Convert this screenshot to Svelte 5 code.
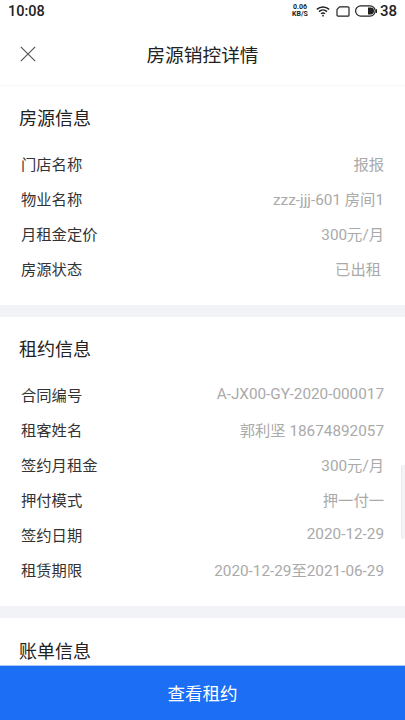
<script lang="ts">
	interface Row {
		label: string;
		value: string;
		inset?: boolean;
	}

	const houseRows: Row[] = [
		{ label: "门店名称", value: "报报" },
		{ label: "物业名称", value: "zzz-jjj-601 房间1" },
		{ label: "月租金定价", value: "300元/月" },
		{ label: "房源状态", value: "已出租", inset: true },
	];

	const leaseRows: Row[] = [
		{ label: "合同编号", value: "A-JX00-GY-2020-000017" },
		{ label: "租客姓名", value: "郭利坚 18674892057" },
		{ label: "签约月租金", value: "300元/月" },
		{ label: "押付模式", value: "押一付一" },
		{ label: "签约日期", value: "2020-12-29" },
		{ label: "租赁期限", value: "2020-12-29至2021-06-29" },
	];

	const sections = [
		{ title: "房源信息", rows: houseRows },
		{ title: "租约信息", rows: leaseRows },
	];
</script>

<div class="page">
	<header class="status-bar">
		<span class="time">10:08</span>
		<div class="status-icons">
			<span class="speed"><span>0.06</span><span>KB/S</span></span>
			<svg class="wifi" width="14" height="12" viewBox="0 0 16 13" fill="none" stroke="#222" stroke-width="1.7">
				<path d="M1 4.6 C5 0.9 11 0.9 15 4.6" />
				<path d="M3.4 7.2 C6 4.9 10 4.9 12.6 7.2" />
				<path d="M5.8 9.6 C7 8.6 9 8.6 10.2 9.6" />
				<circle cx="8" cy="11.8" r="1" fill="#222" stroke="none" />
			</svg>
			<svg class="sim" width="14" height="11" viewBox="0 0 14 11" fill="none" stroke="#222" stroke-width="1.2">
				<path d="M3.6 0.8 H12 a1 1 0 0 1 1 1 V9.2 a1 1 0 0 1 -1 1 H2 a1 1 0 0 1 -1 -1 V3.4 Z" />
			</svg>
			<svg class="battery" width="22" height="12" viewBox="0 0 22 12">
				<rect x="0.6" y="0.8" width="19.6" height="10.4" rx="5.2" fill="none" stroke="#222" stroke-width="1.2" />
				<path d="M13 2.6 H15.6 a3.4 3.4 0 0 1 0 6.8 H13 Z" fill="#222" />
				<rect x="20.7" y="4" width="1.3" height="4" rx="0.6" fill="#222" />
			</svg>
			<span class="level">38</span>
		</div>
	</header>

	<nav class="nav-bar">
		<button class="close" aria-label="关闭">
			<svg width="16" height="16" viewBox="0 0 16 16" stroke="#555" stroke-width="1.2" fill="none">
				<path d="M0.8 0.8 L15.2 15.2 M15.2 0.8 L0.8 15.2" />
			</svg>
		</button>
		<h1>房源销控详情</h1>
	</nav>

	<main class="content">
		{#each sections as section}
			<section class="card">
				<h2>{section.title}</h2>
				{#each section.rows as row}
					<div class="row">
						<span class="label">{row.label}</span>
						<span class="value" class:inset={row.inset}>{row.value}</span>
					</div>
				{/each}
			</section>
		{/each}
		<section class="card last">
			<h2>账单信息</h2>
		</section>
		<div class="scroll-thumb"></div>
	</main>

	<button class="footer-btn">查看租约</button>
</div>

<style>
	:global(body) {
		margin: 0;
		background: #fff;
	}

	.page {
		width: 405px;
		height: 720px;
		display: flex;
		flex-direction: column;
		overflow: hidden;
		background: #f2f3f7;
		font-family: Roboto, "Noto Sans CJK SC", sans-serif;
	}

	.status-bar {
		height: 22px;
		padding: 0 8px;
		display: flex;
		align-items: center;
		justify-content: space-between;
		background: #fff;
		color: #222;
		flex-shrink: 0;
	}

	.time {
		font-size: 14.5px;
		font-weight: 500;
	}

	.status-icons {
		display: flex;
		align-items: center;
	}

	.speed {
		display: flex;
		flex-direction: column;
		align-items: center;
		font-size: 7px;
		line-height: 7px;
		font-weight: 700;
		margin-right: 8px;
	}

	.sim {
		margin-left: 6px;
	}

	.battery {
		margin-left: 5px;
	}

	.level {
		font-size: 15px;
		font-weight: 500;
		margin-left: 3px;
	}

	.nav-bar {
		height: 63px;
		position: relative;
		display: flex;
		align-items: center;
		justify-content: center;
		background: #fff;
		flex-shrink: 0;
		border-bottom: 1px solid #f7f7fa;
	}

	.close {
		position: absolute;
		left: 20px;
		top: 24px;
		padding: 0;
		border: none;
		background: none;
		line-height: 0;
	}

	h1 {
		margin: 0;
		font-size: 18.7px;
		font-weight: 400;
		color: #222;
	}

	.content {
		flex: 1;
		position: relative;
		overflow: hidden;
		display: flex;
		flex-direction: column;
		gap: 12px;
	}

	.card {
		background: #fff;
		padding: 17px 21px 20px;
		flex-shrink: 0;
	}

	.card.last {
		flex: 1;
		padding-top: 18px;
	}

	h2 {
		margin: 0 0 10px -2px;
		font-size: 18px;
		line-height: 32px;
		font-weight: 400;
		color: #222;
	}

	.row {
		height: 35px;
		display: flex;
		align-items: center;
		justify-content: space-between;
	}

	.label {
		font-size: 15.3px;
		color: #333;
	}

	.value {
		font-size: 15.3px;
		color: #aaa;
	}

	.value.inset {
		margin-right: 3px;
	}

	.scroll-thumb {
		position: absolute;
		right: 0;
		top: 379px;
		width: 3px;
		height: 74px;
		background: #f4f4f6;
		border-left: 1px solid #e9e9ec;
		border-radius: 3px 0 0 3px;
	}

	.footer-btn {
		height: 55px;
		flex-shrink: 0;
		border: none;
		border-top: 1px solid #a9c9f7;
		background: #1c6ff5;
		color: #fff;
		font-family: inherit;
		font-size: 17.5px;
		padding: 0 0 2px;
	}
</style>
